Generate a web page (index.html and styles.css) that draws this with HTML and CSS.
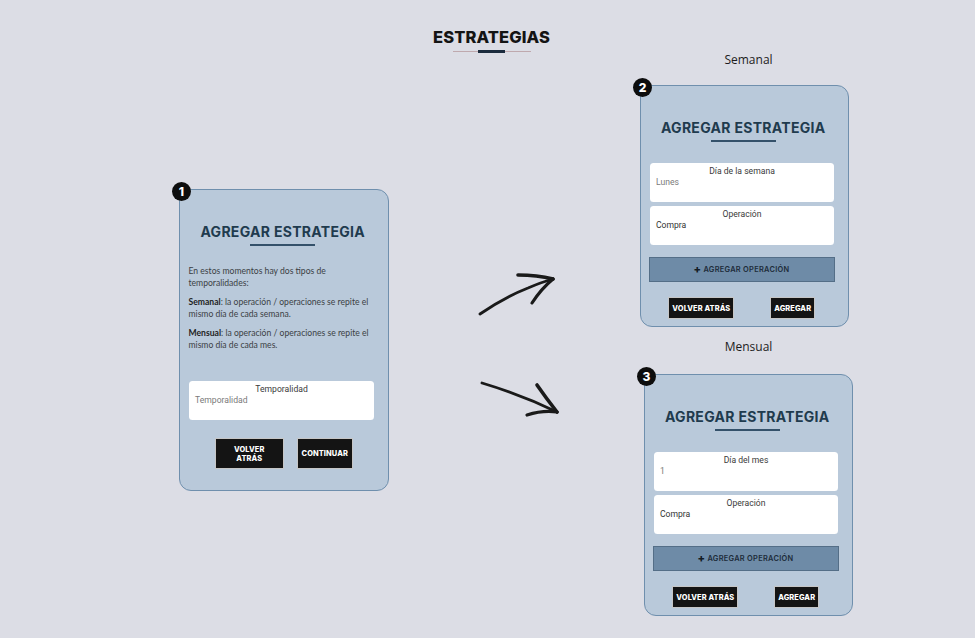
FILE: index.html
```html
<!DOCTYPE html>
<html lang="es">
<head>
<meta charset="utf-8">
<title>Estrategias</title>
<link rel="stylesheet" href="styles.css">
</head>
<body>
<header class="top">
  <h1 class="page-title">ESTRATEGIAS</h1>
  <div class="title-rule"><span class="title-rule-mark"></span></div>
</header>
<main class="stage">
  <section class="col-left">
    <div class="card card-intro">
      <span class="badge">1</span>
      <h2 class="card-title">AGREGAR ESTRATEGIA</h2>
      <div class="card-rule"></div>
      <div class="desc">
        <p>En estos momentos hay dos tipos de temporalidades:</p>
        <p><b>Semanal</b>: la operación / operaciones se repite el mismo día de cada semana.</p>
        <p><b>Mensual</b>: la operación / operaciones se repite el mismo día de cada mes.</p>
      </div>
      <div class="field field-intro">
        <span class="field-label">Temporalidad</span>
        <span class="field-value muted">Temporalidad</span>
      </div>
      <div class="actions actions-intro">
        <button class="btn btn-tall btn-back">VOLVER ATRÁS</button>
        <button class="btn btn-tall btn-next">CONTINUAR</button>
      </div>
    </div>
  </section>

  <div class="arrows">
    <svg width="100" height="165" viewBox="470 255 100 165" fill="none" stroke="#1a1a1a" stroke-linecap="round" stroke-linejoin="round">
      <path d="M480 314 Q505 297 528 288 Q542 282 553 279" stroke-width="2.8"/>
      <path d="M518 275 Q537 275 553 279" stroke-width="3.6"/>
      <path d="M553 279 Q541 289 532 303" stroke-width="3.2"/>
      <path d="M482 383 Q522 395 557 412" stroke-width="2.8"/>
      <path d="M537 385 Q546 398 557 412" stroke-width="3.6"/>
      <path d="M527 415 Q543 410 557 412" stroke-width="3.2"/>
    </svg>
  </div>

  <section class="col-right">
    <div class="caption caption-week">Semanal</div>
    <div class="card card-week">
      <span class="badge">2</span>
      <h2 class="card-title">AGREGAR ESTRATEGIA</h2>
      <div class="card-rule"></div>
      <div class="field field-first">
        <span class="field-label">Día de la semana</span>
        <span class="field-value muted">Lunes</span>
      </div>
      <div class="field">
        <span class="field-label">Operación</span>
        <span class="field-value">Compra</span>
      </div>
      <button class="add-op"><span class="plus">+</span> AGREGAR OPERACIÓN</button>
      <div class="actions actions-form">
        <button class="btn btn-short">VOLVER ATRÁS</button>
        <button class="btn btn-short">AGREGAR</button>
      </div>
    </div>

    <div class="caption caption-month">Mensual</div>
    <div class="card card-month">
      <span class="badge">3</span>
      <h2 class="card-title">AGREGAR ESTRATEGIA</h2>
      <div class="card-rule"></div>
      <div class="field field-first">
        <span class="field-label">Día del mes</span>
        <span class="field-value muted">1</span>
      </div>
      <div class="field">
        <span class="field-label">Operación</span>
        <span class="field-value">Compra</span>
      </div>
      <button class="add-op"><span class="plus">+</span> AGREGAR OPERACIÓN</button>
      <div class="actions actions-form">
        <button class="btn btn-short">VOLVER ATRÁS</button>
        <button class="btn btn-short">AGREGAR</button>
      </div>
    </div>
  </section>
</main>
</body>
</html>
```

FILE: styles.css
```css
* { box-sizing: border-box; }

html, body {
  margin: 0;
  padding: 0;
  background: #dcdde5;
  width: 975px;
  height: 638px;
  overflow: hidden;
  font-family: "Lato", "Noto Sans", sans-serif;
}

.top {
  display: flex;
  flex-direction: column;
  align-items: center;
  padding-left: 8px;
}

.page-title {
  margin: 0;
  padding-top: 27px;
  font-family: "Inter", "Liberation Sans", sans-serif;
  font-weight: 800;
  font-size: 16.5px;
  line-height: 20px;
  color: #141414;
  letter-spacing: 0.1px;
}

.title-rule {
  margin-top: 3px;
  width: 78px;
  height: 3px;
  display: flex;
  justify-content: center;
  align-items: center;
  background: linear-gradient(#dcdde5 0 1px, #bfa9ae 1px 2px, #dcdde5 2px);
}

.title-rule-mark {
  width: 27px;
  height: 3px;
  background: #1b2b3d;
}

.stage {
  display: flex;
  align-items: flex-start;
  padding-left: 179px;
}

.col-left {
  margin-top: 136px;
}

.arrows {
  margin-left: 81px;
  margin-top: 202px;
  width: 100px;
  height: 165px;
}

.arrows svg { display: block; }

.col-right {
  margin-left: 70px;
  width: 213px;
  display: flex;
  flex-direction: column;
}

.caption {
  font-family: "Open Sans", sans-serif;
  font-size: 12px;
  line-height: 14px;
  color: #1c1c1c;
  text-align: center;
  width: 209px;
  margin-left: 4px;
}

.caption-month {
  margin-top: 13px;
}

.card {
  position: relative;
  width: 210px;
  background: #b9c9da;
  border: 1.5px solid #6f8fad;
  border-radius: 12px;
  padding: 33px 14px 0 8.5px;
  display: flex;
  flex-direction: column;
}

.card-intro {
  height: 302px;
}

.card-week {
  margin-top: 18px;
  width: 209px;
  height: 242px;
}

.card-month {
  margin-top: 20px;
  margin-left: 4px;
  width: 209px;
  height: 242px;
}

.badge {
  position: absolute;
  left: -8px;
  top: -8px;
  width: 19px;
  height: 19px;
  border-radius: 50%;
  background: #0d0d0d;
  color: #fff;
  font-family: "Inter", sans-serif;
  font-weight: 800;
  font-size: 12px;
  line-height: 19px;
  text-align: center;
}

.card-title {
  margin: 0;
  font-family: "Inter", "Liberation Sans", sans-serif;
  font-weight: 700;
  font-size: 14px;
  line-height: 18px;
  color: #1f3b4e;
  text-align: center;
  white-space: nowrap;
  letter-spacing: 0.3px;
  padding-left: 3px;
}

.card-rule {
  align-self: center;
  margin-top: 3px;
  margin-left: 3px;
  width: 65px;
  height: 2px;
  background: #34516a;
}

.desc {
  margin-top: 19px;
  font-size: 8.6px;
  line-height: 12px;
  color: #3b3f44;
}

.desc p { margin: 0 0 7px; }
.desc b { font-weight: 700; color: #1e1e1e; }

.field {
  position: relative;
  height: 39px;
  background: #ffffff;
  border-radius: 3.5px;
  margin-top: 4px;
  padding: 3px 6px 0 6.5px;
  display: flex;
  flex-direction: column;
  font-family: "Roboto", "Lato", sans-serif;
}

.field-first { margin-top: 21px; }
.field-intro { margin-top: 23px; }

.field-label {
  text-align: center;
  font-size: 8.6px;
  line-height: 11px;
  color: #3a3a3a;
}

.field-value {
  font-size: 8.6px;
  line-height: 11px;
  color: #333;
}

.field-value.muted { color: #7a7a7a; }

.add-op {
  margin-top: 12px;
  margin-left: -1px;
  width: 186px;
  height: 25px;
  background: #6e8ba7;
  border: 1px solid #546e87;
  font-family: "Inter", sans-serif;
  font-weight: 600;
  font-size: 7.4px;
  letter-spacing: 0.3px;
  color: #1d2c3a;
  padding: 0;
  display: flex;
  align-items: center;
  justify-content: center;
  gap: 2px;
}

.add-op .plus {
  font-size: 11px;
  font-weight: 800;
  line-height: 1;
  color: #141c24;
}

.actions {
  display: flex;
  justify-content: center;
}

.actions-intro {
  margin-top: 18px;
  gap: 13px;
  padding-left: 5px;
}

.actions-form {
  margin-top: 15px;
  gap: 36px;
}

.btn {
  background: #141414;
  color: #ffffff;
  border: 1px solid #c6c6c6;
  font-family: "Inter", sans-serif;
  font-weight: 800;
  font-size: 7.4px;
  letter-spacing: 0.1px;
  padding: 0 3px;
  display: flex;
  align-items: center;
  justify-content: center;
  text-align: center;
  line-height: 9px;
}

.btn-tall { height: 31px; }
.btn-back { width: 69px; padding: 0 14px; }
.btn-next { width: 56px; }

.btn-short { height: 22px; padding: 0 3px; }
```
